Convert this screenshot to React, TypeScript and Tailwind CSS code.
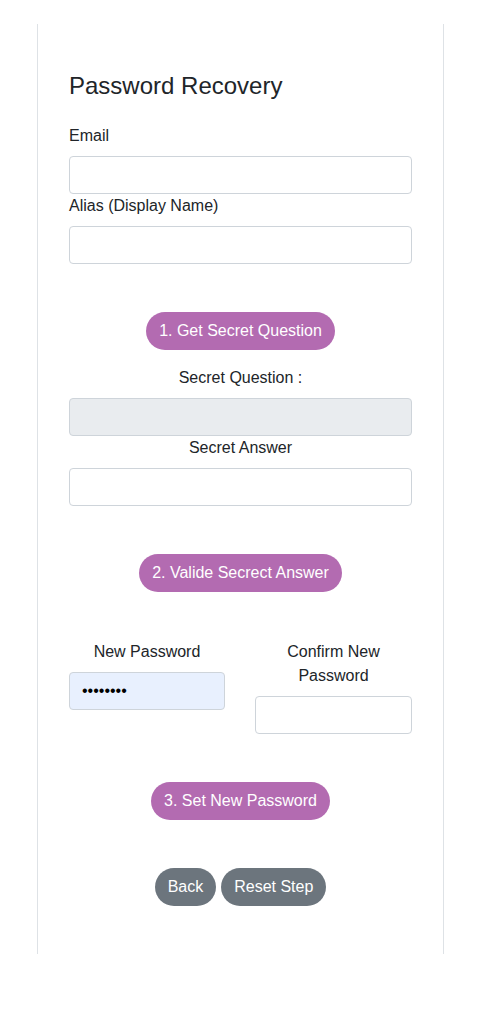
import { useState } from 'react'

const inputCls =
  'block w-full h-[38px] px-3 rounded-[4px] border border-[#ced4da] text-[16px] text-[#495057] outline-none'

const pillCls =
  'inline-block h-[38px] px-3 rounded-full border border-transparent text-[16px] leading-[24px] text-white'

export default function App() {
  const [email, setEmail] = useState('')
  const [alias, setAlias] = useState('')
  const [answer, setAnswer] = useState('')
  const [password, setPassword] = useState('password')
  const [confirm, setConfirm] = useState('')

  return (
    <div className="min-h-[1014px] bg-white font-['Liberation_Sans',Arial,sans-serif] text-[16px] leading-[24px] text-[#212529]">
      <div className="ml-[37px] w-[407px] pt-[24px]">
        <div className="border-x border-[#dee2e6] px-[31px] pt-[47px] pb-[48px]">
          <h4 className="text-[24px] leading-[29px] font-normal">Password Recovery</h4>

          {/* Account */}
          <label className="block mt-[24px] mb-[8px]">Email</label>
          <input className={`${inputCls} bg-white`} value={email} onChange={(e) => setEmail(e.target.value)} />
          <label className="block mb-[8px]">Alias (Display Name)</label>
          <input className={`${inputCls} bg-white`} value={alias} onChange={(e) => setAlias(e.target.value)} />

          <div className="mt-[48px] text-center">
            <button className={`${pillCls} bg-[#b36bb1]`}>1. Get Secret Question</button>
          </div>

          {/* Secret question */}
          <label className="block mt-[16px] mb-[8px] text-center">Secret Question :</label>
          <input className={`${inputCls} bg-[#e9ecef]`} disabled />
          <label className="block mb-[8px] text-center">Secret Answer</label>
          <input className={`${inputCls} bg-white`} value={answer} onChange={(e) => setAnswer(e.target.value)} />

          <div className="mt-[48px] text-center">
            <button className={`${pillCls} bg-[#b36bb1]`}>2. Valide Secrect Answer</button>
          </div>

          {/* New password */}
          <div className="mt-[48px] grid grid-cols-[156px_157px] gap-x-[30px]">
            <div>
              <label className="block mb-[8px] text-center">New Password</label>
              <input
                type="password"
                className={`${inputCls} bg-[#e8f0fe] text-black`}
                value={password}
                onChange={(e) => setPassword(e.target.value)}
              />
            </div>
            <div>
              <label className="block mb-[8px] text-center">Confirm New Password</label>
              <input
                type="password"
                className={`${inputCls} bg-white`}
                value={confirm}
                onChange={(e) => setConfirm(e.target.value)}
              />
            </div>
          </div>

          <div className="mt-[48px] text-center">
            <button className={`${pillCls} bg-[#b36bb1]`}>3. Set New Password</button>
          </div>

          <div className="mt-[48px] flex justify-center gap-[5px]">
            <button className={`${pillCls} bg-[#6c757d]`}>Back</button>
            <button className={`${pillCls} bg-[#6c757d]`}>Reset Step</button>
          </div>
        </div>
      </div>
    </div>
  )
}
